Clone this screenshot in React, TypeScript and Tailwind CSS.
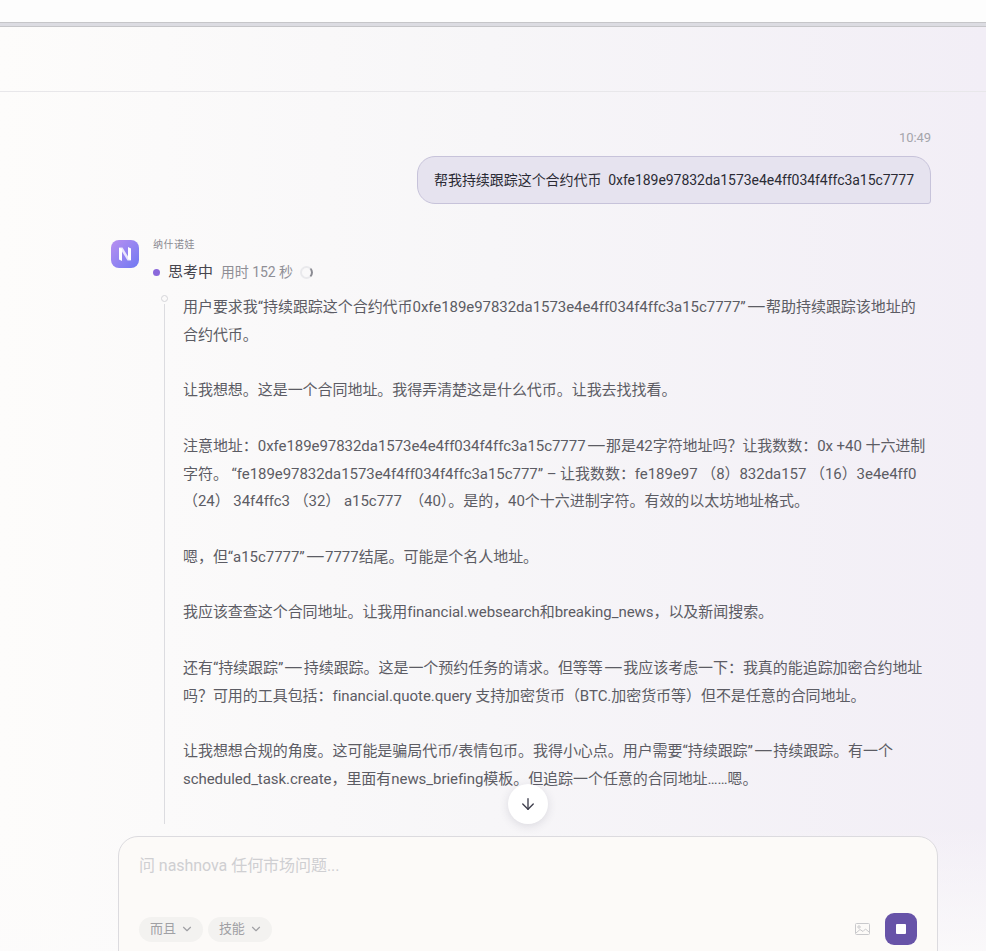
import { ArrowDown, ChevronDown } from "lucide-react";

const font = "font-['Roboto','Noto_Sans_CJK_SC',sans-serif]";

const paragraphs = [
  ["用户要求我“持续跟踪这个合约代币0xfe189e97832da1573e4e4ff034f4ffc3a15c7777”—帮助持续跟踪该地址的", "合约代币。"],
  ["让我想想。这是一个合同地址。我得弄清楚这是什么代币。让我去找找看。"],
  [
    "注意地址：0xfe189e97832da1573e4e4ff034f4ffc3a15c7777—那是42字符地址吗？让我数数：0x +40 十六进制",
    "字符。 “fe189e97832da1573e4f4ff034f4ffc3a15c777” – 让我数数：fe189e97 （8）832da157 （16）3e4e4ff0",
    "（24）\u00a034f4ffc3 （32） a15c777\u00a0 （40）。是的，40个十六进制字符。有效的以太坊地址格式。",
  ],
  ["嗯，但“a15c7777”—7777结尾。可能是个名人地址。"],
  ["我应该查查这个合同地址。让我用financial.websearch和breaking_news，以及新闻搜索。"],
  [
    "还有“持续跟踪”—持续跟踪。这是一个预约任务的请求。但等等—我应该考虑一下：我真的能追踪加密合约地址",
    "吗？可用的工具包括：financial.quote.query 支持加密货币（BTC.加密货币等）但不是任意的合同地址。",
  ],
  [
    "让我想想合规的角度。这可能是骗局代币/表情包币。我得小心点。用户需要“持续跟踪”—持续跟踪。有一个",
    "scheduled_task.create，里面有news_briefing模板。但追踪一个任意的合同地址……嗯。",
  ],
];

function Line({ text }: { text: string }) {
  const parts = text.split("—");
  return (
    <div>
      {parts.map((part, i) => (
        <span key={i}>
          {i > 0 && <span className="inline-block w-[20.5px] text-center scale-x-[1.7]">—</span>}
          {part}
        </span>
      ))}
    </div>
  );
}

export default function App() {
  return (
    <div className={`${font} tracking-[-0.05px] h-[951px] w-full overflow-hidden flex flex-col bg-gradient-to-r from-[#fdfcfb] via-[#f7f6f8] to-[#f2eef6] relative`}>
      <div className="h-[22px] shrink-0 bg-[#fdfdfd]" />
      <div className="h-[5px] shrink-0 bg-[#dcdce2] border-y border-[#c6c6c9]" />
      <div className="h-[65px] shrink-0 border-b border-[#e8e7ea]" />

      <main className="flex-1 min-h-0 overflow-hidden pl-[111px] pr-[55px] pt-[38px]">
        <div className="text-right text-[13px] leading-4 text-[#a5a5ab]">10:49</div>
        <div className="flex justify-end mt-[10px]">
          <div className="h-12 flex items-center px-4 rounded-tl-[18px] rounded-tr-[18px] rounded-bl-[18px] rounded-br-[3px] border border-[#c7c3da] bg-[#e6e3ef] text-[14px] text-[#2b2b35] whitespace-pre">
            帮我持续跟踪这个合约代币  0xfe189e97832da1573e4e4ff034f4ffc3a15c7777
          </div>
        </div>

        <div className="flex mt-[36px] gap-[14px]">
          <div className="w-7 h-7 shrink-0 rounded-lg bg-gradient-to-br from-[#b88ff0] to-[#6f78f2] flex items-center justify-center">
            <svg width="20" height="20" viewBox="0 0 20 20" fill="white">
              <path d="M4 3.5 L7 5 V17 L4 15.5 Z" />
              <path d="M13 3 L16 4.5 V16.5 L13 15 Z" />
              <path d="M4.5 3.5 H7.5 L15.5 16.5 H12.5 Z" fillOpacity="0.8" />
            </svg>
          </div>
          <div className="min-w-0 flex-1">
            <div className="text-[10px] leading-3 tracking-[0.5px] text-[#8b8b92] -mt-[1px]">纳什诺娃</div>
            <div className="flex items-center mt-[11px] h-5">
              <span className="w-[7px] h-[7px] rounded-full bg-[#8a68db] mr-2" />
              <span className="text-[15px] text-[#45454d]">思考中</span>
              <span className="text-[14px] text-[#8f8f96] ml-2">用时 152 秒</span>
              <span className="ml-[7px] w-[13px] h-[13px] rounded-full border-2 border-[#e9e9ec] border-r-[#8a8a92]" />
            </div>
            <div className="flex mt-[12px]">
              <div className="w-[22px] ml-[8px] shrink-0 flex flex-col items-start">
                <span className="w-[7px] h-[7px] rounded-full border border-[#d5d5d9] mt-[1px]" />
                <span className="w-px ml-[3px] mt-[2px] h-[520px] bg-[#dcdce0]" />
              </div>
              <div className="text-[15px] leading-[27.75px] text-[#5c5c64] whitespace-nowrap">
                {paragraphs.map((p, i) => (
                  <div key={i} className="mb-[27.75px]">
                    {p.map((l) => (
                      <Line key={l} text={l} />
                    ))}
                  </div>
                ))}
              </div>
            </div>
          </div>
        </div>
      </main>

      <button className="absolute left-[508px] top-[784px] w-10 h-10 rounded-full bg-white shadow-[0_2px_10px_rgba(60,60,90,0.15)] flex items-center justify-center text-[#3e3e4c]">
        <ArrowDown size={18} strokeWidth={1.8} />
      </button>

      <div className="absolute left-0 right-0 top-[825px] bottom-0 bg-gradient-to-b from-transparent to-[#fcfbfb]/80">
        <div className="absolute left-[118px] top-[11px] w-[820px] h-[140px] rounded-[20px] border border-[#dcdbdf] bg-[#fcfaf8] px-5 pt-[19px]">
          <div className="text-[16px] leading-5 text-[#cfcfd2]">问 nashnova 任何市场问题...</div>
          <div className="flex items-center gap-[5px] mt-[37px]">
            <span className="flex items-center gap-1 h-[25px] pl-[11px] pr-[9px] rounded-full bg-[#f3f2f0] text-[13px] text-[#a0a0a4]">
              而且 <ChevronDown size={14} />
            </span>
            <span className="flex items-center gap-1 h-[25px] pl-[11px] pr-[9px] rounded-full bg-[#f3f2f0] text-[13px] text-[#a0a0a4]">
              技能 <ChevronDown size={14} />
            </span>
            <span className="ml-auto w-8 h-8 flex items-center justify-center text-[#c9c9cc]">
              <svg width="15" height="12" viewBox="0 0 15 12" fill="none" stroke="currentColor" strokeWidth="1">
                <rect x="0.5" y="0.5" width="14" height="11" rx="1" />
                <circle cx="4" cy="4" r="1.2" />
                <path d="M1 10 L5 6.5 L8 8.5 L10.5 6 L14 9" />
              </svg>
            </span>
            <span className="ml-[2px] w-8 h-8 rounded-[9px] bg-[#6753a8] flex items-center justify-center">
              <span className="w-[10px] h-[10px] bg-white rounded-[1px]" />
            </span>
          </div>
        </div>
      </div>
    </div>
  );
}
